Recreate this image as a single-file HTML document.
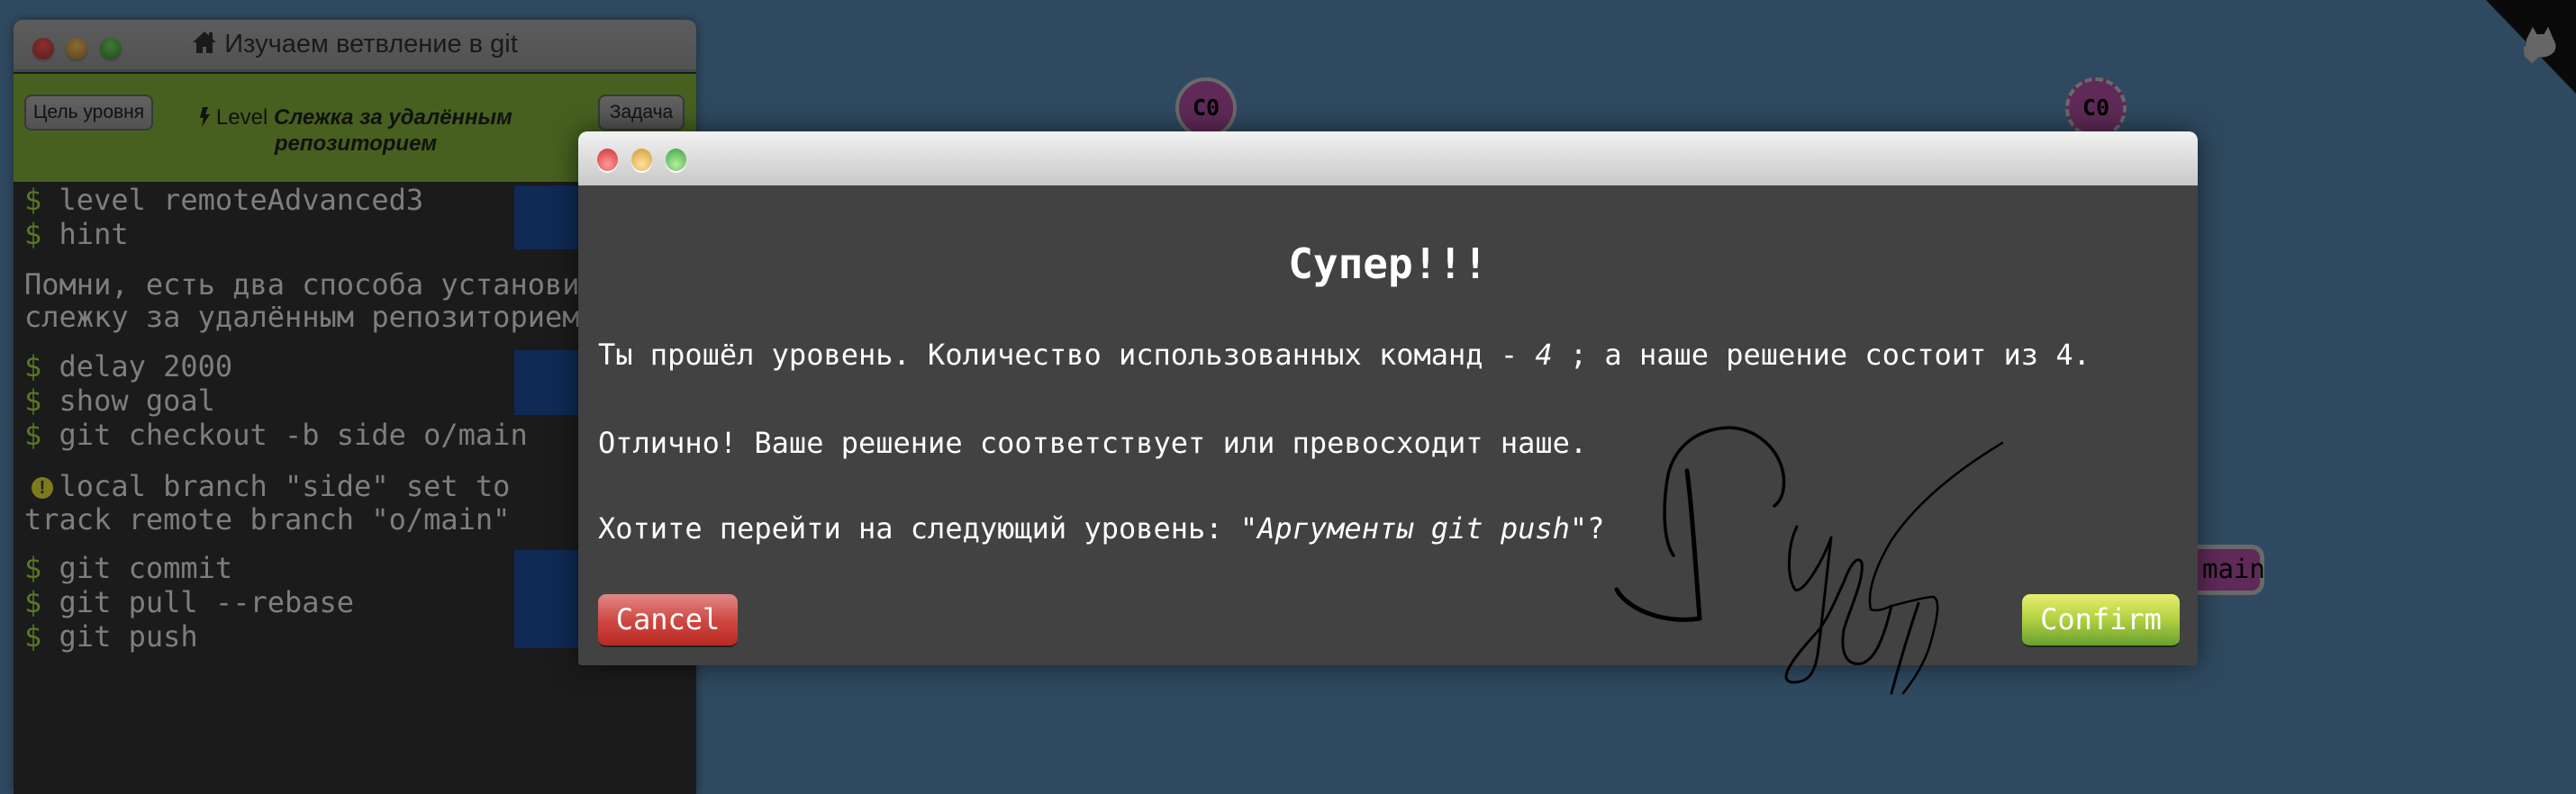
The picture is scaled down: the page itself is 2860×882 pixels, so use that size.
<!DOCTYPE html>
<html><head><meta charset="utf-8"><style>
*{margin:0;padding:0;box-sizing:border-box}
body{width:2860px;height:862px;overflow:hidden;background:#2f4a60;position:relative;font-family:"Liberation Sans","DejaVu Sans",sans-serif}
.abs{position:absolute}
.mono{font-family:"DejaVu Sans Mono","Liberation Mono",monospace}
.lw{left:15px;top:22px;width:758px;height:860px;background:#1b1b1b;border-radius:10px 10px 0 0;overflow:hidden;box-shadow:0 0 12px rgba(0,0,0,.4)}
.tb{left:0;top:0;width:758px;height:58px;background:linear-gradient(#5c5c5c,#525252);border-bottom:3px solid #3a4a55}
.dot{position:absolute;border-radius:50%}
.green{left:0;top:60px;width:758px;height:120px;background:#47601f}
.btn{position:absolute;background:linear-gradient(#626262,#525252);border:2px solid #383838;border-radius:8px;color:#111;font-size:21px;text-align:center;line-height:36px}
.tl{position:absolute;left:12px;font-size:32px;line-height:38px;color:#7e7e7e;white-space:pre}
.tl b{color:#567a22;font-weight:normal}
.blue{position:absolute;left:556px;width:210px;background:#0f2a55}
.modal{left:642px;top:146px;width:1798px;height:593px;background:#424242;border-radius:10px 10px 4px 4px;box-shadow:0 0 30px rgba(0,0,0,.55);overflow:hidden}
.mtb{left:0;top:0;width:1798px;height:60px;background:linear-gradient(#f2f2f2,#c8c8c8)}
.mt{position:absolute;left:22px;color:#fff;font-size:32px;white-space:pre}
.b2{position:absolute;top:514px;height:59px;border-radius:9px;color:#fff;font-size:32px;text-align:center;line-height:56px;border-bottom:2px solid #222}
.node{position:absolute;width:68px;height:68px;border-radius:50%;background:#5f2a58;border:4px dashed #6a6a6a;color:#000;font-weight:bold;font-size:25px;text-align:center;line-height:60px}
</style></head><body>

<div class="node mono" style="left:1305px;top:86px;border-style:solid;border-color:#6a6a6a">C0</div>
<div class="node mono" style="left:2293px;top:86px">C0</div>
<div class="abs mono" style="left:2380px;top:605px;width:134px;height:56px;border:5px solid #6a6a6a;border-radius:14px;background:#5f2a58;color:#000;font-size:29px;line-height:44px;padding-left:60px">main</div>

<svg class="abs" style="left:2750px;top:0" width="110" height="110" viewBox="0 0 110 110">
<polygon points="10,0 110,0 110,104" fill="#0a0a0a"/>
<path d="M56,44 l6,-12 l4,7 h9 l4,-7 l5,12 q5,8 0,14 q-7,6 -16,4 l-7,7 l-5,-5 q-4,-2 -2,-9 q2,-6 2,-11z M60,62 q-8,-2 -7,-10" fill="#666" stroke="#666" stroke-width="2"/>
</svg>

<div class="abs lw">
 <div class="abs tb">
  <div class="dot" style="left:21px;top:20px;width:24px;height:24px;background:radial-gradient(circle at 50% 35%,#8a2e2e,#5a1e1e);box-shadow:0 2px 2px #444"></div>
  <div class="dot" style="left:58px;top:20px;width:24px;height:24px;background:radial-gradient(circle at 50% 35%,#8a6a34,#5a441a);box-shadow:0 2px 2px #444"></div>
  <div class="dot" style="left:96px;top:20px;width:24px;height:24px;background:radial-gradient(circle at 50% 35%,#3e7a34,#1f4a1a);box-shadow:0 2px 2px #444"></div>
  <div class="abs" style="left:0;width:758px;top:11px;text-align:center;font-size:29px;color:#1a1a1a"><svg width="28" height="26" viewBox="0 0 28 26" style="vertical-align:-2px"><path d="M14,1 L1,13 h4 v12 h7 v-7 h4 v7 h7 v-12 h4 z" fill="#1a1a1a"/><rect x="19" y="2" width="4" height="7" fill="#1a1a1a"/></svg> Изучаем ветвление в git</div>
 </div>
 <div class="abs green">
  <div class="btn" style="left:12px;top:23px;width:143px;height:40px">Цель уровня</div>
  <div class="btn" style="left:649px;top:23px;width:96px;height:40px">Задача</div>
  <div class="abs" style="left:190px;width:380px;top:34px;text-align:center;font-size:24px;line-height:29px;color:#111"><svg width="12" height="22" viewBox="0 0 12 22" style="vertical-align:-3px"><path d="M4,0 h6 l-3,8 h5 l-9,14 l2,-10 h-4z" fill="#111"/></svg> Level <b><i>Слежка за удалённым репозиторием</i></b></div>
 </div>
 <div class="blue" style="top:184px;height:71px"></div>
 <div class="blue" style="top:367px;height:72px"></div>
 <div class="blue" style="top:589px;height:109px"></div>
 <div class="tl mono" style="top:181px"><b>$</b> level remoteAdvanced3</div>
 <div class="tl mono" style="top:219px"><b>$</b> hint</div>
 <div class="tl mono" style="top:275px">Помни, есть два способа установить</div>
 <div class="tl mono" style="top:311px">слежку за удалённым репозиторием</div>
 <div class="tl mono" style="top:366px"><b>$</b> delay 2000</div>
 <div class="tl mono" style="top:404px"><b>$</b> show goal</div>
 <div class="tl mono" style="top:442px"><b>$</b> git checkout -b side o/main</div>
 <div class="dot" style="left:20px;top:508px;width:24px;height:24px;background:#7e7a1e;color:#222;font-size:20px;font-weight:bold;text-align:center;line-height:24px">!</div>
 <div class="tl mono" style="top:499px">  local branch "side" set to</div>
 <div class="tl mono" style="top:536px">track remote branch "o/main"</div>
 <div class="tl mono" style="top:590px"><b>$</b> git commit</div>
 <div class="tl mono" style="top:628px"><b>$</b> git pull --rebase</div>
 <div class="tl mono" style="top:666px"><b>$</b> git push</div>
</div>

<div class="abs modal">
 <div class="abs mtb">
  <div class="dot" style="left:21px;top:19px;width:23px;height:25px;background:radial-gradient(circle at 50% 70%,#ff9a9a,#d03030);box-shadow:0 2px 0 #fff"></div>
  <div class="dot" style="left:59px;top:19px;width:23px;height:25px;background:radial-gradient(circle at 50% 70%,#ffe0a0,#d09a30);box-shadow:0 2px 0 #fff"></div>
  <div class="dot" style="left:97px;top:19px;width:23px;height:25px;background:radial-gradient(circle at 50% 70%,#b0f0a0,#40a040);box-shadow:0 2px 0 #fff"></div>
 </div>
 <div class="abs mono" style="left:0;width:1798px;top:120px;text-align:center;color:#fff;font-size:46px;font-weight:bold">Супер!!!</div>
 <div class="mt mono" style="top:229px">Ты прошёл уровень. Количество использованных команд - <i>4</i> ; а наше решение состоит из 4.</div>
 <div class="mt mono" style="top:327px">Отлично! Ваше решение соответствует или превосходит наше.</div>
 <div class="mt mono" style="top:422px">Хотите перейти на следующий уровень: "<i>Аргументы git push</i>"?</div>
 <div class="b2 mono" style="left:22px;width:155px;background:linear-gradient(#e08888,#d04a44 50%,#b82a22)">Cancel</div>
 <div class="b2 mono" style="left:1603px;width:175px;background:linear-gradient(#e8ee70,#b0d040 50%,#6aa030)">Confirm</div>
</div>

<svg class="abs" style="left:0;top:0" width="2860" height="862" viewBox="0 0 2860 862" fill="none" stroke="#000" stroke-linecap="round" stroke-linejoin="round">
<path d="M1858,617 C1846,600 1846,560 1852,527 C1860,495 1885,476 1920,475 C1950,476 1975,498 1980,527 C1982,545 1978,556 1970,562" stroke-width="3.5"/>
<path d="M1873,523 C1878,560 1882,620 1887,687 C1870,690 1850,688 1835,683 C1815,677 1800,665 1795,655" stroke-width="5"/>
<path d="M1995,585 C1985,605 1983,640 1993,655 C2003,660 2025,620 2033,597 C2028,640 2022,700 2018,727 C2014,752 2005,758 1990,758 C1975,756 1985,738 2013,707 C2030,690 2040,660 2047,647 C2053,630 2062,615 2067,625 C2070,645 2052,680 2047,700 C2043,725 2050,740 2067,737 C2080,733 2090,715 2100,673" stroke-width="3"/>
<path d="M2223,492 C2180,518 2130,555 2100,600 C2085,625 2072,655 2077,677 C2085,680 2095,675 2100,673 C2120,668 2138,663 2147,663 C2155,668 2150,690 2144,712 C2138,735 2125,755 2113,770" stroke-width="2.5"/>
<path d="M2130,670 C2120,700 2108,740 2100,770" stroke-width="3"/>
</svg>
</body></html>
